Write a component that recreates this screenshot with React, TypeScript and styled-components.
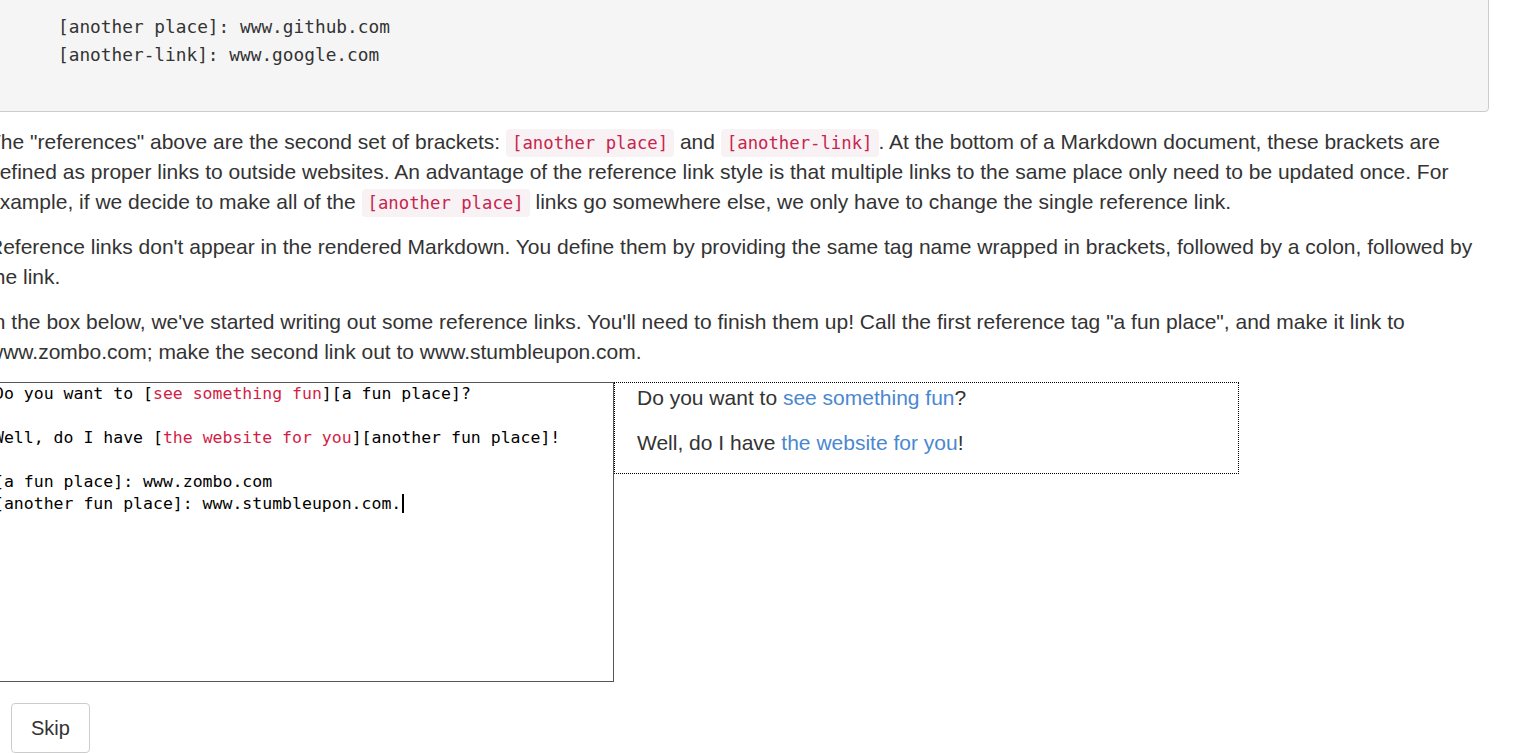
import styled, { createGlobalStyle } from 'styled-components';

const GlobalStyle = createGlobalStyle`
  html, body {
    margin: 0;
    padding: 0;
    background: #ffffff;
    overflow: hidden;
  }
  body {
    font-family: "Liberation Sans", Arial, sans-serif;
    color: #333333;
  }
`;

const Page = styled.div`
  width: 1501px;
  margin-left: -12px;
`;

const CodeBlock = styled.pre`
  margin: -113px 0 0 0;
  padding: 13px 13px 42px 69px;
  background-color: #f5f5f5;
  border: 1px solid #cccccc;
  border-radius: 4px;
  font-family: "DejaVu Sans Mono", "Liberation Mono", monospace;
  font-size: 17.8px;
  line-height: 28px;
  color: #333333;
  white-space: pre;
`;

const Para = styled.p`
  margin: 15px 0;
  font-size: 21px;
  line-height: 30px;
`;

const InlineCode = styled.code`
  font-family: "DejaVu Sans Mono", "Liberation Mono", monospace;
  font-size: 17.3px;
  line-height: 1;
  padding: 4px 6px;
  color: #c7254e;
  background-color: #f9f2f4;
  border-radius: 4px;
`;

const Workspace = styled.div`
  display: flex;
  align-items: flex-start;
  margin-top: 15px;
`;

const Editor = styled.div`
  box-sizing: border-box;
  width: 626px;
  height: 300px;
  padding: 0 2px 0 5px;
  border: 1px solid #555555;
  font-family: "DejaVu Sans Mono", "Liberation Mono", monospace;
  font-size: 16.5px;
  line-height: 22px;
  color: #000000;
  white-space: pre;
`;

const EditorLine = styled.div`
  min-height: 22px;
`;

const LinkText = styled.span`
  color: #d21d47;
`;

const Cursor = styled.span`
  display: inline-block;
  width: 2px;
  height: 19px;
  margin-left: 1px;
  vertical-align: -4px;
  background: #000000;
`;

const Preview = styled.div`
  box-sizing: border-box;
  width: 625px;
  padding: 0 22px;
  border: 1px dotted #000000;
`;

const PreviewPara = styled.p`
  margin: 0 0 15px;
  font-size: 21px;
  line-height: 30px;
`;

const PreviewLink = styled.a`
  color: #4a88d0;
  text-decoration: none;
`;

const SkipButton = styled.button`
  margin: 21px 0 0 23px;
  padding: 9px 19px;
  font-family: "Liberation Sans", Arial, sans-serif;
  font-size: 20px;
  line-height: 30px;
  color: #333333;
  background: #ffffff;
  border: 1px solid #cccccc;
  border-radius: 4px;
`;

const codeSample = `Here's [a link to something][another place].
Here's [yet another link][another-link].
And now back to [the first link][another place].

[another place]: www.github.com
[another-link]: www.google.com`;

export default function App() {
  return (
    <>
      <GlobalStyle />
      <Page>
        <CodeBlock>{codeSample}</CodeBlock>
        <Para>
          The "references" above are the second set of brackets: <InlineCode>[another place]</InlineCode> and{' '}
          <InlineCode>[another-link]</InlineCode>. At the bottom of a Markdown document, these brackets are
          defined as proper links to outside websites. An advantage of the reference link style is that multiple
          links to the same place only need to be updated once. For example, if we decide to make all of the{' '}
          <InlineCode>[another place]</InlineCode> links go somewhere else, we only have to change the single
          reference link.
        </Para>
        <Para>
          Reference links don't appear in the rendered Markdown. You define them by providing the same tag name
          wrapped in brackets, followed by a colon, followed by the link.
        </Para>
        <Para>
          In the box below, we've started writing out some reference links. You'll need to finish them up! Call
          the first reference tag "a fun place", and make it link to www.zombo.com; make the second link out to
          www.stumbleupon.com.
        </Para>
        <Workspace>
          <Editor>
            <EditorLine>
              Do you want to [<LinkText>see something fun</LinkText>][a fun place]?
            </EditorLine>
            <EditorLine />
            <EditorLine>
              Well, do I have [<LinkText>the website for you</LinkText>][another fun place]!
            </EditorLine>
            <EditorLine />
            <EditorLine>[a fun place]: www.zombo.com</EditorLine>
            <EditorLine>
              [another fun place]: www.stumbleupon.com.<Cursor />
            </EditorLine>
          </Editor>
          <Preview>
            <PreviewPara>
              Do you want to <PreviewLink href="#">see something fun</PreviewLink>?
            </PreviewPara>
            <PreviewPara>
              Well, do I have <PreviewLink href="#">the website for you</PreviewLink>!
            </PreviewPara>
          </Preview>
        </Workspace>
        <SkipButton>Skip</SkipButton>
      </Page>
    </>
  );
}
